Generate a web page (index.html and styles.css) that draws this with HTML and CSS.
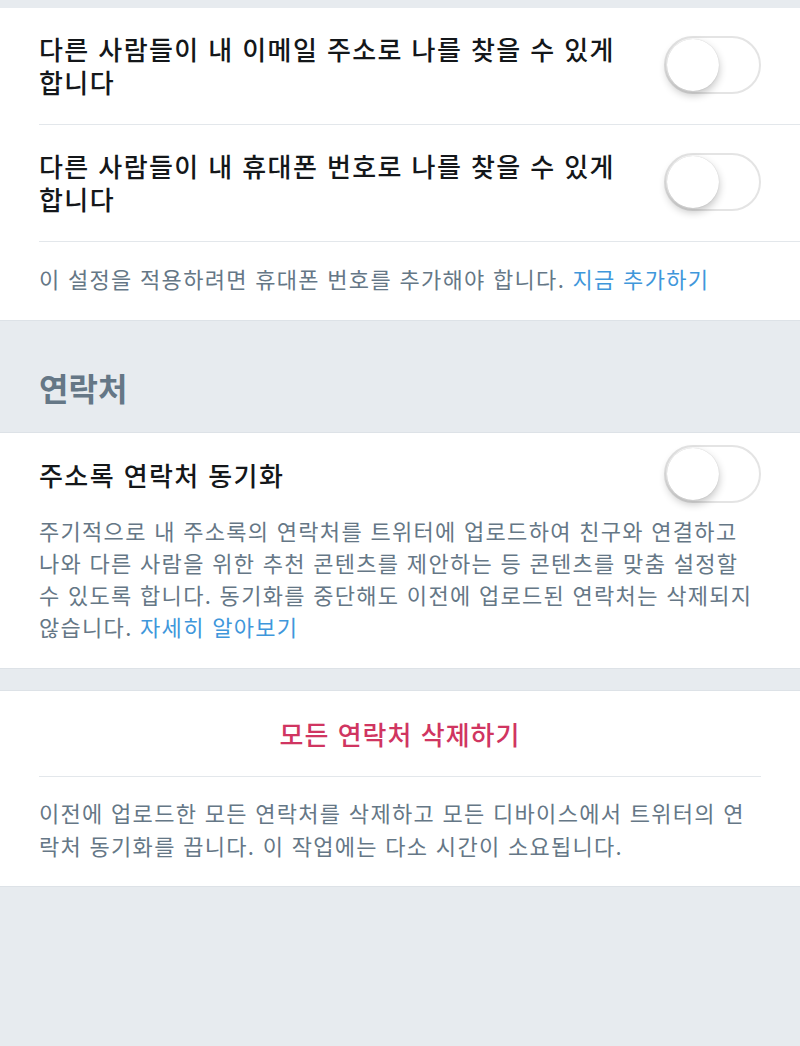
FILE: index.html
```html
<!DOCTYPE html>
<html lang="ko">
<head>
  <meta charset="UTF-8">
  <meta name="viewport" content="width=device-width, initial-scale=1.0">
  <title>검색 가능성 및 연락처</title>
  <link rel="stylesheet" href="styles.css">
</head>
<body>
  <section class="group group-first">
    <div class="row">
      <div class="row-title">다른 사람들이 내 이메일 주소로 나를 찾을 수 있게 합니다</div>
      <span class="toggle"><span class="knob"></span></span>
    </div>
    <div class="row">
      <div class="row-title">다른 사람들이 내 휴대폰 번호로 나를 찾을 수 있게 합니다</div>
      <span class="toggle"><span class="knob"></span></span>
    </div>
    <p class="note">이 설정을 적용하려면 휴대폰 번호를 추가해야 합니다. <a href="#">지금 추가하기</a></p>
  </section>

  <h2 class="group-header">연락처</h2>

  <section class="group">
    <div class="sync">
      <div class="sync-head">
        <div class="row-title">주소록 연락처 동기화</div>
        <span class="toggle"><span class="knob"></span></span>
      </div>
      <p class="sync-desc">주기적으로 내 주소록의 연락처를 트위터에 업로드하여 친구와 연결하고 나와 다른 사람을 위한 추천 콘텐츠를 제안하는 등 콘텐츠를 맞춤 설정할 수 있도록 합니다. 동기화를 중단해도 이전에 업로드된 연락처는 삭제되지 않습니다. <a href="#">자세히 알아보기</a></p>
    </div>
  </section>

  <section class="group group-spaced">
    <div class="danger">
      <button class="danger-btn">모든 연락처 삭제하기</button>
    </div>
    <p class="danger-note">이전에 업로드한 모든 연락처를 삭제하고 모든 디바이스에서 트위터의 연락처 동기화를 끕니다. 이 작업에는 다소 시간이 소요됩니다.</p>
  </section>
</body>
</html>
```

FILE: styles.css
```css
body {
  margin: 0;
  background-color: #e7ebef;
  font-family: "Noto Sans CJK KR", "Noto Sans", sans-serif;
  color: #14171a;
  min-height: 1046px;
}
a {
  color: #3f97db;
  text-decoration: none;
}
.group {
  background-color: #fff;
  border-top: 1px solid #dde2e7;
  border-bottom: 1px solid #dde2e7;
}
.group-first {
  margin-top: 8px;
  border-top: none;
}
.group-spaced {
  margin-top: 21px;
}
.row {
  display: flex;
  align-items: center;
  justify-content: space-between;
  margin-left: 39px;
  padding: 24px 39px 26px 0;
  border-bottom: 1px solid #e3e7eb;
}
.row-title {
  max-width: 600px;
  font-size: 26px;
  font-weight: 500;
  line-height: 33px;
  letter-spacing: 1.4px;
}
.toggle {
  box-sizing: border-box;
  display: flex;
  align-items: center;
  flex-shrink: 0;
  width: 97px;
  height: 58px;
  padding: 0 1px;
  border: 2px solid #e4e4e4;
  border-radius: 29px;
  background-color: #fff;
}
.knob {
  width: 52px;
  height: 52px;
  border-radius: 50%;
  background-color: #fff;
  box-shadow: 0 4px 8px rgba(0,0,0,0.24), 0 0 1px rgba(0,0,0,0.2);
}
.note {
  margin: 0;
  padding: 20px 39px 26px;
  font-size: 22px;
  line-height: 32px;
  letter-spacing: 1.3px;
  color: #657786;
}
.group-header {
  margin: 0;
  padding: 46px 39px 25px;
  font-size: 32px;
  font-weight: 700;
  line-height: 40px;
  color: #657786;
}
.sync {
  padding: 12px 39px 26px;
}
.sync-head {
  display: flex;
  align-items: center;
  justify-content: space-between;
}
.sync-desc {
  margin: 11px 0 0;
  font-size: 22px;
  line-height: 32px;
  letter-spacing: 1.3px;
  color: #657786;
}
.danger {
  display: flex;
  justify-content: center;
  align-items: center;
  height: 85px;
  margin: 0 39px;
  border-bottom: 1px solid #e3e7eb;
}
.danger-btn {
  border: none;
  background: none;
  padding: 0;
  font-family: inherit;
  font-size: 26px;
  font-weight: 500;
  letter-spacing: 1px;
  color: #d03561;
  cursor: pointer;
}
.danger-note {
  margin: 0;
  padding: 19px 39px 24px;
  font-size: 22px;
  line-height: 33px;
  letter-spacing: 1.3px;
  color: #657786;
}
```
